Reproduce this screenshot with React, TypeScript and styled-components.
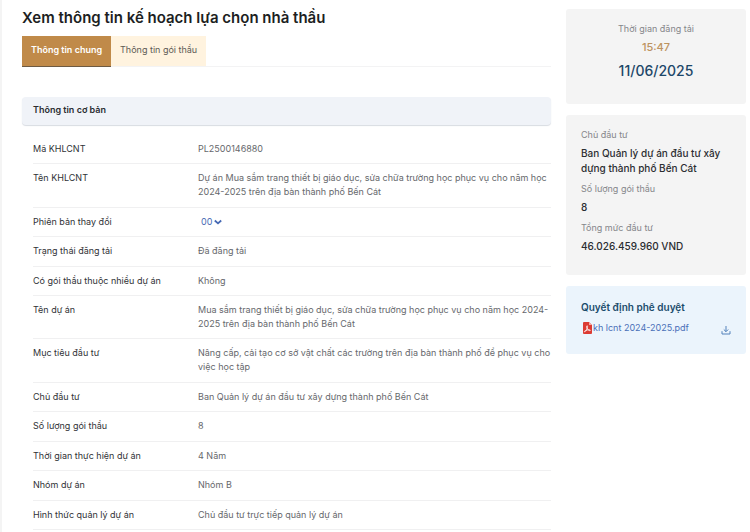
import { useState } from "react";
import styled, { createGlobalStyle } from "styled-components";

const GlobalStyle = createGlobalStyle`
  *, *::before, *::after { box-sizing: border-box; }
  body {
    margin: 0;
    background: #fff;
    color: #2b2d31;
    font-family: Inter, "Liberation Sans", sans-serif;
    font-size: 9px;
    line-height: 14px;
  }
  h1, h2, p, dl, dd { margin: 0; }
  button { font: inherit; border: 0; cursor: pointer; }
`;

const Page = styled.div`
  display: grid;
  grid-template-columns: minmax(0, 1fr) 180px;
  column-gap: 15px;
  min-height: 100vh;
  padding: 9px 4px 2px 20px;
  border-left: 2px solid #f4f4f4;
`;

const Main = styled.main`
  display: flex;
  flex-direction: column;
`;

const Title = styled.h1`
  font-size: 15px;
  line-height: 18px;
  font-weight: 600;
  color: #1d1f23;
`;

const Tabs = styled.div`
  display: flex;
  margin-top: 9px;
  border-bottom: 1px solid #f3f3f4;
`;

const Tab = styled.button<{ $active: boolean }>`
  height: 30px;
  padding: 0 9px 2px;
  font-weight: ${(p) => (p.$active ? 600 : 400)};
  color: ${(p) => (p.$active ? "#fff" : "#5c5a55")};
  background: ${(p) => (p.$active ? "#c08a49" : "#fff3df")};
  box-shadow: ${(p) => (p.$active ? "0 1px 0 #6d5a43" : "none")};
`;

const SectionTitle = styled.h2`
  margin-top: 30px;
  padding: 6px 11px 8px;
  border-radius: 4px;
  background: #f0f3f8;
  box-shadow: 0 1px 1px #d8dce2;
  font-size: 9px;
  line-height: 14px;
  font-weight: 600;
`;

const Details = styled.dl`
  flex: 1;
  display: grid;
  margin: 10px 0 0 11px;
`;

const Row = styled.div`
  display: grid;
  grid-template-columns: 165px minmax(0, 1fr);
  padding: 7px 0;
  border-bottom: 1px solid #f0f0f1;
`;

const Label = styled.dt`
  color: #303236;
`;

const Value = styled.dd`
  color: #66686c;
`;

const VersionButton = styled.button`
  display: flex;
  align-items: center;
  gap: 2px;
  padding: 0 3px;
  background: none;
  color: #4669b4;
`;

const Sidebar = styled.aside`
  display: flex;
  flex-direction: column;
  gap: 11px;
`;

const Card = styled.section<{ $tone?: "blue"; $center?: boolean; $bottom: number }>`
  padding: 13px 15px ${(p) => p.$bottom}px;
  border-radius: 3px;
  background: ${(p) => (p.$tone === "blue" ? "#ebf4fc" : "#f4f4f4")};
  text-align: ${(p) => (p.$center ? "center" : "left")};
`;

const Caption = styled.p`
  color: #85868a;
`;

const Time = styled.p`
  margin-top: 4px;
  font-size: 11px;
  font-weight: 500;
  color: #bd9360;
`;

const PostedDate = styled.p`
  margin-top: 8px;
  font-size: 14px;
  line-height: 18px;
  font-weight: 500;
  color: #1c4768;
`;

const Fact = styled.p`
  margin: 4px 0 6px;
  font-size: 10px;
  line-height: 15px;
  font-weight: 500;
`;

const DecisionTitle = styled.h2`
  font-size: 10px;
  line-height: 16px;
  font-weight: 600;
  color: #1c4c6c;
`;

const FileRow = styled.div`
  display: flex;
  align-items: center;
  justify-content: space-between;
  margin-top: 6px;
`;

const FileLink = styled.a`
  display: flex;
  align-items: center;
  color: #4a70b8;
  text-decoration: none;
`;

const DownloadButton = styled.button`
  display: flex;
  padding: 3px 0 0;
  background: none;
  color: #5482bb;
`;

const ChevronIcon = () => (
  <svg width="8" height="8" viewBox="0 0 8 8" fill="none" stroke="currentColor" strokeWidth="1.8" aria-hidden="true">
    <path d="M0.8 2.5 4 5.4 7.2 2.5" />
  </svg>
);

const PdfIcon = () => (
  <svg width="12" height="14" viewBox="0 0 12 14" aria-hidden="true">
    <path d="M3 1h5l3 3v8a1 1 0 0 1-1 1H3a1 1 0 0 1-1-1V2a1 1 0 0 1 1-1z" fill="#dc3b33" />
    <path d="M8 1v3h3z" fill="#f5aaa5" />
    <path
      d="M6.2 4.8c.8 0 .1 2.6-1 4.6-.7 1.2-1.6 1.8-1.8 1.2-.2-.7 2.3-1.8 4.4-1.9 1.6 0 1.9.9 1.1 1C7.6 9.8 5.3 7.2 5.6 5.400c.1-.4.3-.6.6-.6z"
      fill="none"
      stroke="#fff"
      strokeWidth="0.8"
    />
  </svg>
);

const DownloadIcon = () => (
  <svg width="10" height="10" viewBox="0 0 10 10" fill="none" stroke="currentColor" strokeWidth="1" aria-hidden="true">
    <path d="M5 1v5.5M2.8 4.5 5 6.7 7.2 4.5M1 6.2V9h8V6.2" />
  </svg>
);

const before: [string, string][] = [
  ["Mã KHLCNT", "PL2500146880"],
  [
    "Tên KHLCNT",
    "Dự án Mua sắm trang thiết bị giáo dục, sửa chữa trường học phục vụ cho năm học 2024-2025 trên địa bàn thành phố Bến Cát",
  ],
];

const after: [string, string][] = [
  ["Trạng thái đăng tải", "Đã đăng tải"],
  ["Có gói thầu thuộc nhiều dự án", "Không"],
  [
    "Tên dự án",
    "Mua sắm trang thiết bị giáo dục, sửa chữa trường học phục vụ cho năm học 2024-2025 trên địa bàn thành phố Bến Cát",
  ],
  [
    "Mục tiêu đầu tư",
    "Nâng cấp, cải tạo cơ sở vật chất các trường trên địa bàn thành phố để phục vụ cho việc học tập",
  ],
  ["Chủ đầu tư", "Ban Quản lý dự án đầu tư xây dựng thành phố Bến Cát"],
  ["Số lượng gói thầu", "8"],
  ["Thời gian thực hiện dự án", "4 Năm"],
  ["Nhóm dự án", "Nhóm B"],
  ["Hình thức quản lý dự án", "Chủ đầu tư trực tiếp quản lý dự án"],
];

const tabs = ["Thông tin chung", "Thông tin gói thầu"];

const DetailRow = ({ label, value }: { label: string; value: string }) => (
  <Row>
    <Label>{label}</Label>
    <Value>{value}</Value>
  </Row>
);

export default function App() {
  const [active, setActive] = useState(0);

  return (
    <>
      <GlobalStyle />
      <Page>
        <Main>
          <Title>Xem thông tin kế hoạch lựa chọn nhà thầu</Title>
          <Tabs role="tablist">
            {tabs.map((tab, i) => (
              <Tab key={tab} role="tab" aria-selected={active === i} $active={active === i} onClick={() => setActive(i)}>
                {tab}
              </Tab>
            ))}
          </Tabs>
          <SectionTitle>Thông tin cơ bản</SectionTitle>
          <Details>
            {before.map(([label, value]) => (
              <DetailRow key={label} label={label} value={value} />
            ))}
            <Row>
              <Label>Phiên bản thay đổi</Label>
              <Value>
                <VersionButton type="button">
                  00
                  <ChevronIcon />
                </VersionButton>
              </Value>
            </Row>
            {after.map(([label, value]) => (
              <DetailRow key={label} label={label} value={value} />
            ))}
          </Details>
        </Main>
        <Sidebar>
          <Card $center $bottom={24}>
            <Caption>Thời gian đăng tải</Caption>
            <Time>15:47</Time>
            <PostedDate>11/06/2025</PostedDate>
          </Card>
          <Card $bottom={15}>
            <Caption>Chủ đầu tư</Caption>
            <Fact>Ban Quản lý dự án đầu tư xây dựng thành phố Bến Cát</Fact>
            <Caption>Số lượng gói thầu</Caption>
            <Fact>8</Fact>
            <Caption>Tổng mức đầu tư</Caption>
            <Fact>46.026.459.960 VND</Fact>
          </Card>
          <Card $tone="blue" $bottom={19}>
            <DecisionTitle>Quyết định phê duyệt</DecisionTitle>
            <FileRow>
              <FileLink href="#">
                <PdfIcon />
                kh lcnt 2024-2025.pdf
              </FileLink>
              <DownloadButton type="button" aria-label="Tải xuống">
                <DownloadIcon />
              </DownloadButton>
            </FileRow>
          </Card>
        </Sidebar>
      </Page>
    </>
  );
}
